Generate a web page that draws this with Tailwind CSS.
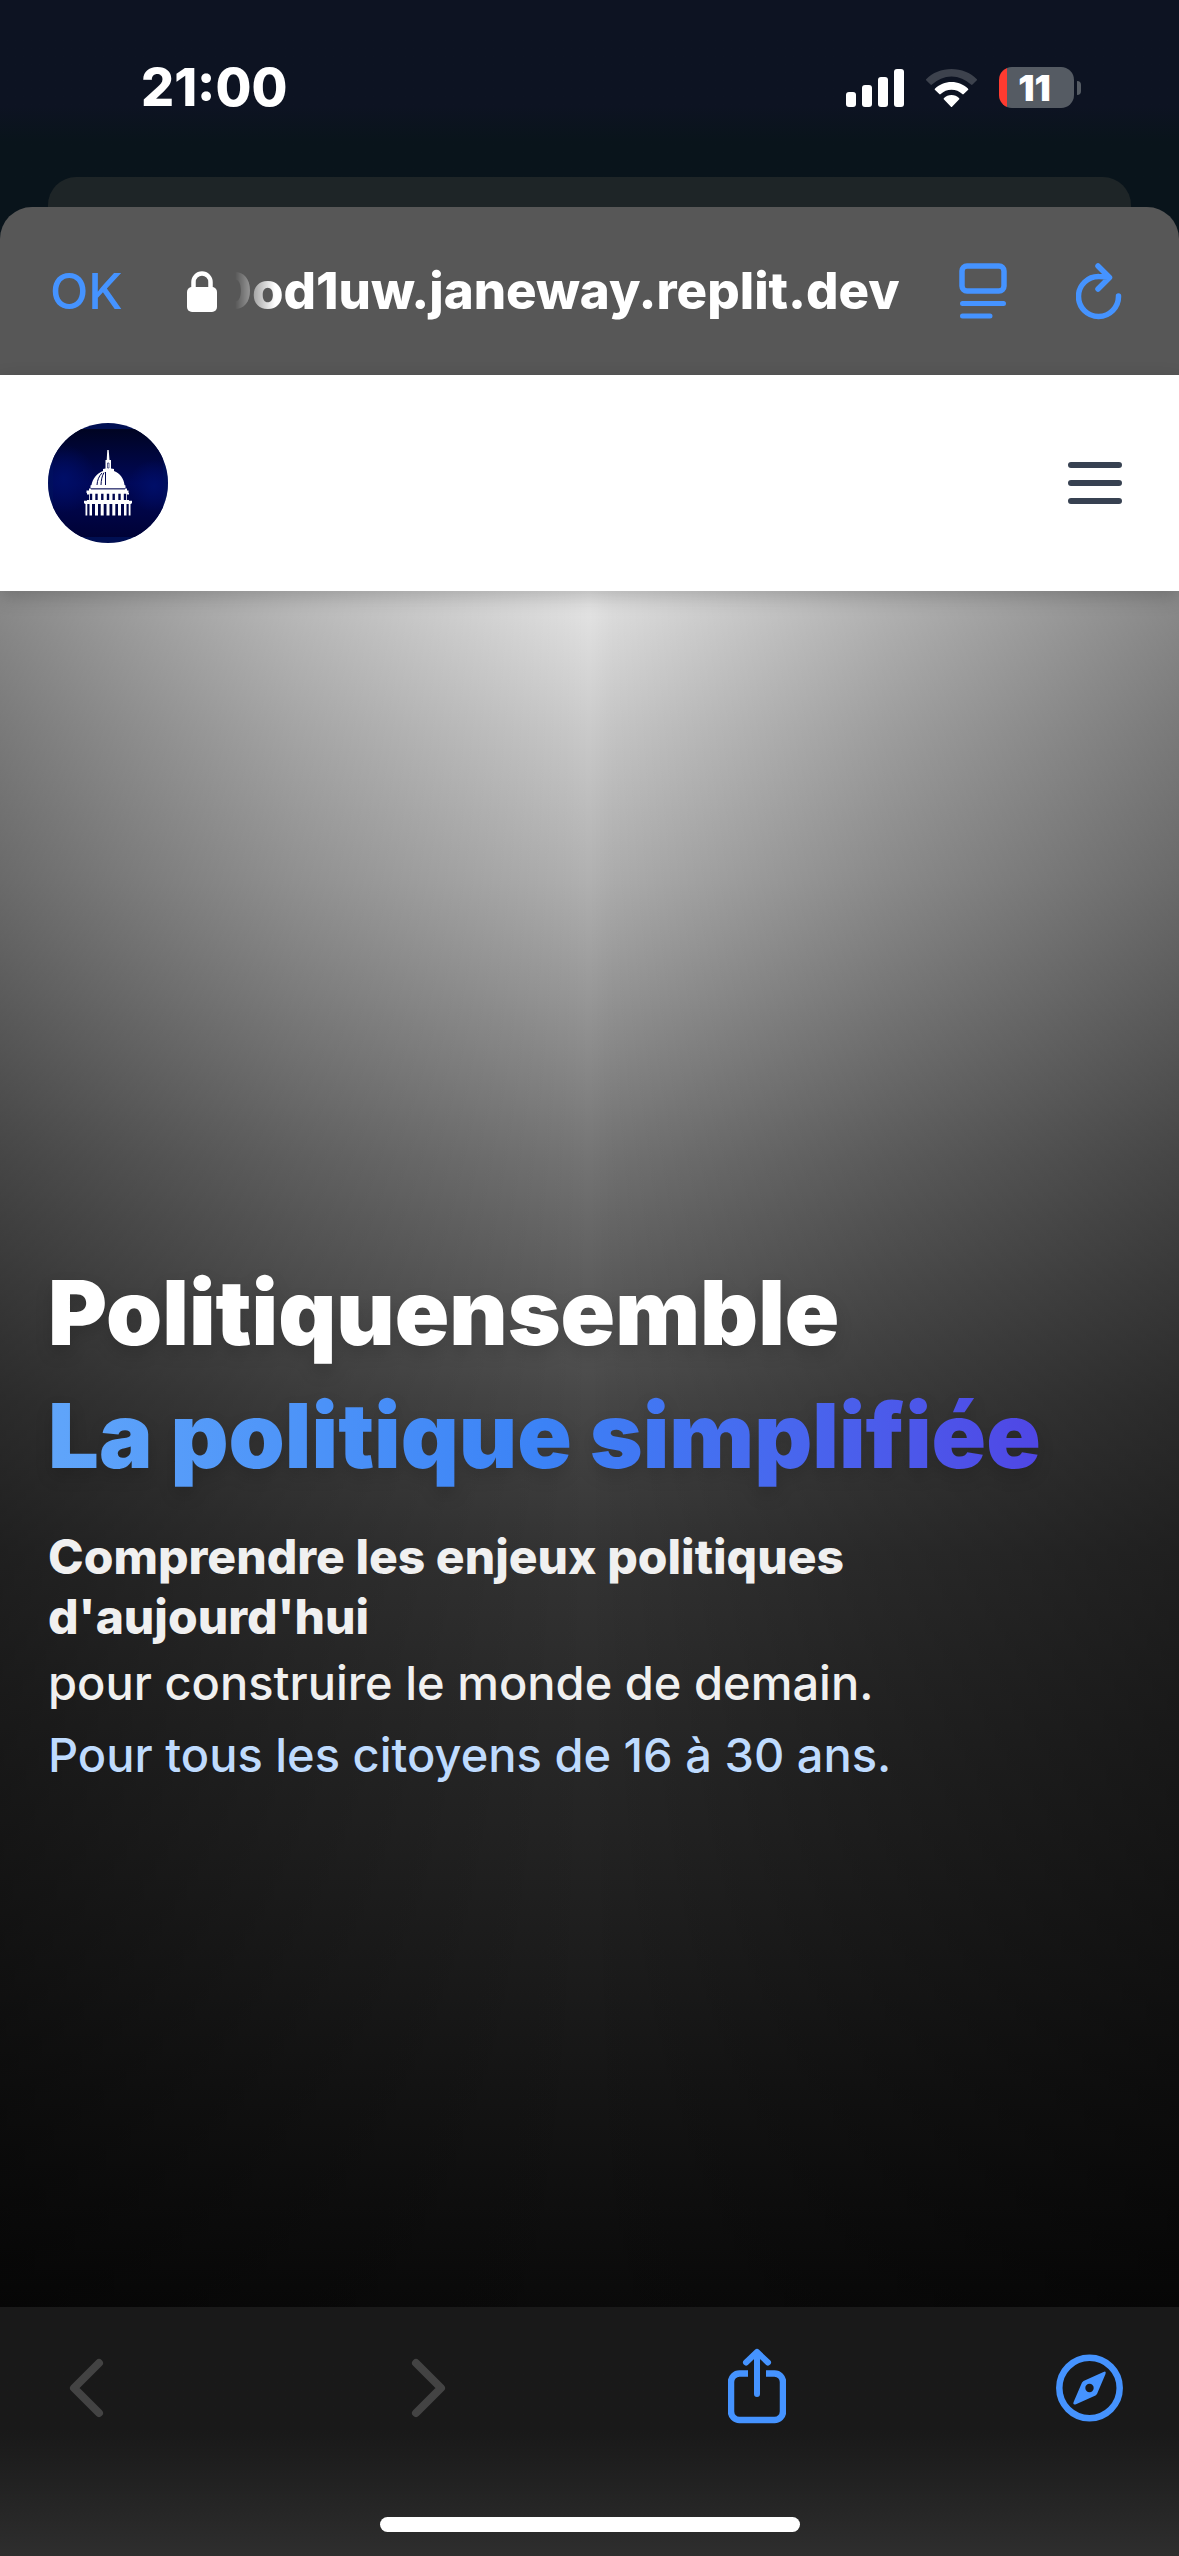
<!DOCTYPE html>
<html lang="fr">
<head>
<meta charset="utf-8">
<meta name="viewport" content="width=device-width, initial-scale=1">
<title>Politiquensemble</title>
<script src="https://cdn.jsdelivr.net/npm/@tailwindcss/browser@4"></script>
</head>
<body class="flex min-h-screen flex-col bg-[#09141b] font-['Inter',sans-serif] text-white">

  <!-- Status bar -->
  <div class="flex h-[177px] items-start justify-between bg-linear-to-b from-[#0d1322] from-60% to-[#09141b] to-80% pr-[98px] pl-[141px]">
    <time class="mt-[57px] text-[52px] leading-[62px] font-extrabold">21:00</time>
    <div class="mt-[67px] flex items-center gap-[22px]">
      <svg class="h-[38px] w-[58px]" viewBox="0 0 58 38" fill="#fff" aria-label="Signal">
        <rect x="0" y="23" width="10" height="15" rx="3"/><rect x="16" y="16" width="10" height="22" rx="3"/><rect x="32" y="8" width="10" height="30" rx="3"/><rect x="48" y="0" width="10" height="38" rx="3"/>
      </svg>
      <svg class="h-[38px] w-[51px]" viewBox="0 0 51 38" aria-label="Wi-Fi">
        <path fill="#3d424d" d="M25.500 0C35.500 0 44.500 3.800 50.600 10a1 1 0 0 1 0 1.500L46.500 15.500a1 1 0 0 1-1.500 0A28 28 0 0 0 6 15.500a1 1 0 0 1-1.500 0L.4 11.500a1 1 0 0 1 0-1.500C6.500 3.800 15.500 0 25.500 0Z"/>
        <path fill="#fff" d="M25.500 13c6.500 0 12 2.500 16.400 6.500a1 1 0 0 1 0 1.500l-4.200 4.100a1 1 0 0 1-1.400 0 15.500 15.500 0 0 0-21.600 0 1 1 0 0 1-1.400 0L9.100 21a1 1 0 0 1 0-1.500C13.500 15.500 19 13 25.500 13ZM25.500 26c3 0 5.500 1.200 7.500 3 .5.500.5 1 0 1.500l-6.700 6.900a1 1 0 0 1-1.600 0L18 30.500c-.5-.5-.5-1 0-1.500 2-1.800 4.500-3 7.500-3Z"/>
      </svg>
      <div class="flex items-center gap-[3px]">
        <div class="flex h-[41px] w-[75px] items-center justify-center rounded-[13px] bg-[linear-gradient(to_right,#ff3b30_8px,#555b63_8px)] pr-1 text-[36px] leading-none font-black">11</div>
        <div class="h-[14px] w-[4px] rounded-r-full bg-[#555b63]"></div>
      </div>
    </div>
  </div>
  <div class="mx-12 h-[30px] rounded-t-[28px] bg-[#1e2527]"></div>

  <!-- Browser address bar -->
  <header class="flex h-[168px] items-center rounded-t-[32px] bg-[#575757] pr-[57px] pl-[50px]">
    <button type="button" class="text-[50px] leading-[62px] font-medium text-[#4593ff]">OK</button>
    <div class="ml-16 flex min-w-0 flex-1 items-center">
      <svg class="h-[41px] w-[30px] shrink-0" viewBox="0 0 30 41" aria-label="Connexion sécurisée">
        <rect y="16" width="30" height="25" rx="5" fill="#fff"/><path d="M6.500 18v-7a8.500 8.500 0 0 1 17 0v7" fill="none" stroke="#fff" stroke-width="4.500"/>
      </svg>
      <div class="ml-1 flex w-[679px] justify-end mask-[linear-gradient(to_right,transparent_14px,#000_54px)] text-[51px] leading-[62px] font-extrabold whitespace-nowrap">0od1uw.janeway.replit.dev</div>
    </div>
    <div class="flex items-center gap-[69px]">
      <button type="button" aria-label="Options de la page">
        <svg class="h-[56px] w-[48px]" viewBox="0 0 48 56" fill="none" stroke="#4593ff" stroke-width="5.500" stroke-linecap="round"><rect x="3" y="3" width="42" height="25" rx="5"/><path d="M3.500 40.500h41M3.500 53h27.500" stroke-width="5"/></svg>
      </button>
      <button type="button" aria-label="Actualiser">
        <svg class="h-[58px] w-[46px]" viewBox="0 0 46 58" fill="none" stroke="#4593ff" stroke-width="5.500" stroke-linecap="round" stroke-linejoin="round"><path d="M42.500 34A20 20 0 1 1 23 14.500q5 0 9 .5M22 4l11.500 11.500L22 27"/></svg>
      </button>
    </div>
  </header>

  <!-- Site navigation -->
  <nav class="z-10 flex h-[216px] items-center justify-between bg-white px-12 shadow-[0_6px_18px_rgba(0,0,0,0.2)]">
    <a href="#" aria-label="Politiquensemble">
      <svg class="size-[120px]" viewBox="0 0 120 120">
        <defs>
          <clipPath id="disc"><circle cx="60" cy="60" r="60"/></clipPath>
          <linearGradient id="night" x2="0" y2="1"><stop stop-color="#000422"/><stop offset=".5" stop-color="#000858"/><stop offset="1" stop-color="#000236"/></linearGradient>
          <radialGradient id="glow"><stop stop-color="#000e68"/><stop offset="1" stop-color="#000e68" stop-opacity="0"/></radialGradient>
        </defs>
        <g clip-path="url(#disc)">
          <rect width="120" height="120" fill="#000f52"/>
          <rect x="5" y="6" width="110" height="108" fill="url(#night)"/>
          <ellipse cx="16" cy="56" rx="32" ry="34" fill="url(#glow)"/><ellipse cx="106" cy="63" rx="26" ry="26" fill="url(#glow)"/>
        </g>
        <g fill="#fff">
          <path d="M59.300 27h1.400l.8 10h1.500v8.500l3 .5v2c6 2 10 8 10.500 14l1 .5V65h-35v-2.500l1-.5C44.500 56 49 50 55 48v-2l2.500-.5V37h1.200Z"/>
          <path d="M41 65.500h38v2h1.500V70H81v1.500h-2V77h2v.7h3V80h-.5v1H36.500v-1H36v-2.300h3V77h2v-5.500h-2V70h-.5v-2.500H41Z"/>
          <path d="M37.500 80.500h1.800v12h-1.800ZM41.500 80.500H44v12h-2.500ZM47 80.500h3v12h-3ZM52.700 80.500h3v12h-3ZM58.500 80.500h3v12h-3ZM64.300 80.500h3v12h-3ZM70 80.500h3v12h-3ZM76 80.500h2.500v12H76ZM80.700 80.500h1.800v12h-1.800Z"/>
        </g>
        <g fill="none" stroke="#000650">
          <path d="M49 62c.3-5 2-9 5-12M53 62c.2-5 1-9 3-12.500M57.500 62V49" stroke-width="1"/>
          <path d="M59.500 40h1.500v5h-1.500Z" stroke-width=".6"/>
          <path d="M43 66h34" stroke-width=".8"/>
          <path d="M43 70.800V77M48.500 70.800V77M54.300 70.800V77M60 70.800V77M65.700 70.800V77M71.500 70.800V77M77 70.800V77" stroke-width="2.400"/>
        </g>
      </svg>
    </a>
    <button type="button" aria-label="Ouvrir le menu">
      <svg class="size-[72px]" viewBox="0 0 24 24" fill="none" stroke="#374151" stroke-width="2" stroke-linecap="round"><path d="M4 6h16M4 12h16M4 18h16"/></svg>
    </button>
  </nav>

  <!-- Hero -->
  <main class="flex-1 bg-[linear-gradient(to_right,rgba(0,0,0,0.4),rgba(0,0,0,0.19)_25%,rgba(0,0,0,0.02)_48%,rgba(0,0,0,0)_50%,rgba(0,0,0,0.03)_52%,rgba(0,0,0,0.22)_75%,rgba(0,0,0,0.4)),linear-gradient(to_bottom,#e6e6e6,#cacaca_8%,#b0b0b0_17%,#747474_33%,#5e5e5e_40%,#484848_47%,#343434_56%,#2a2a2a_65%,#202020_76%,#141414_88%,#0a0a0a)] px-12 pt-[660px]">
    <h1 class="text-[90px] leading-[123px] font-black drop-shadow-[0_8px_8px_rgba(0,0,0,0.15)]">
      <span class="block">Politiquensemble</span>
      <span class="block w-fit bg-linear-to-r from-[#60a5fa] via-[#3b82f6] to-[#4f46e5] bg-clip-text text-transparent">La politique simplifiée</span>
    </h1>
    <div class="mt-[30px] text-[47px] leading-[60px] font-medium text-[#f0f0f0]">
      <p class="max-w-[900px] text-[48px] font-extrabold">Comprendre les enjeux politiques d'aujourd'hui</p>
      <p class="mt-[6px]">pour construire le monde de demain.</p>
      <p class="mt-3 text-[#bfdbfe]">Pour tous les citoyens de 16 à 30 ans.</p>
    </div>
  </main>

  <!-- Browser toolbar -->
  <footer class="flex h-[249px] flex-col items-center justify-between bg-linear-to-b from-[#191919] from-50% to-[#2e2e2e] pt-[40px] pb-6">
    <div class="flex w-full items-center justify-between pr-[56px] pl-[69px]">
      <button type="button" disabled class="w-[60px]" aria-label="Page précédente"><svg class="h-[80px] w-[35px]" viewBox="0 0 35 80" fill="none" stroke="#434343" stroke-width="8" stroke-linecap="round" stroke-linejoin="round"><path d="M30 16 5 41l25 25"/></svg></button>
      <button type="button" disabled class="flex w-[60px] justify-center" aria-label="Page suivante"><svg class="h-[80px] w-[35px]" viewBox="0 0 35 80" fill="none" stroke="#434343" stroke-width="8" stroke-linecap="round" stroke-linejoin="round"><path d="m5 16 25 25L5 66"/></svg></button>
      <button type="button" class="flex w-[60px] justify-center" aria-label="Partager"><svg class="h-[80px] w-[58px]" viewBox="0 0 58 80" fill="none" stroke="#4593ff" stroke-width="6.500" stroke-linecap="round" stroke-linejoin="round"><path stroke-linecap="butt" d="M20 26.500h-8.500a8.500 8.500 0 0 0-8.500 8.500v29.500a8.500 8.500 0 0 0 8.500 8.500h35a8.500 8.500 0 0 0 8.500-8.500V35a8.500 8.500 0 0 0-8.500-8.500H38"/><path d="M29 47V6M18 15.500 29 5l11 10.500" stroke-width="6"/></svg></button>
      <button type="button" aria-label="Ouvrir dans le navigateur"><svg class="h-[80px] w-[67px]" viewBox="0 0 67 80"><circle cx="33.500" cy="41" r="30.200" fill="none" stroke="#4593ff" stroke-width="6.500"/><path fill="#4593ff" fill-rule="evenodd" d="M47.500 25q3-1.500 2 2L41 47l-1.500 1.500L20 57.200q-3.500 1-2.500-2L26 35.500l1.500-1.500ZM33.500 36.800a4.200 4.200 0 1 0 0 8.400 4.200 4.200 0 0 0 0-8.400Z"/></svg></button>
    </div>
    <div class="h-[15px] w-[420px] rounded-full bg-white"></div>
  </footer>
</body>
</html>
